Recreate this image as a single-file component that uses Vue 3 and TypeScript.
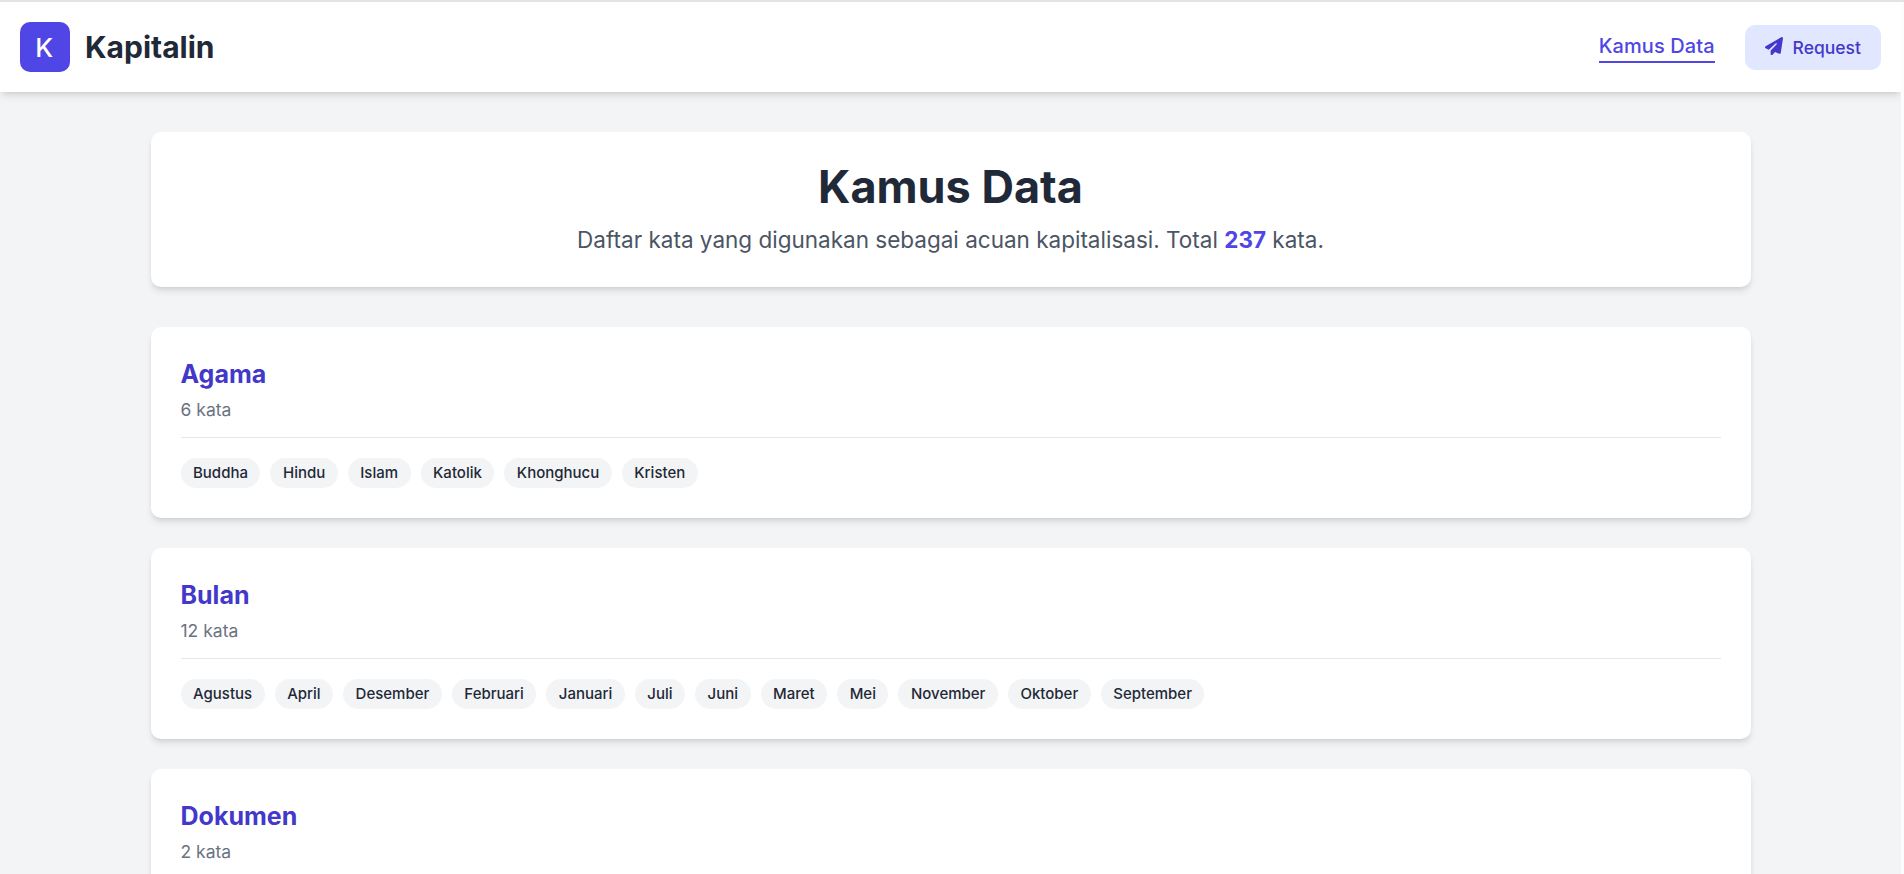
<script setup lang="ts">
interface Category {
  name: string
  words: string[]
}

const categories: Category[] = [
  { name: 'Agama', words: ['Buddha', 'Hindu', 'Islam', 'Katolik', 'Khonghucu', 'Kristen'] },
  {
    name: 'Bulan',
    words: ['Agustus', 'April', 'Desember', 'Februari', 'Januari', 'Juli', 'Juni', 'Maret', 'Mei', 'November', 'Oktober', 'September'],
  },
]
const lastCategory = { name: 'Dokumen', count: 2 }
const total = 237
</script>

<template>
  <div class="page">
    <header class="bar">
      <div class="brand">
        <div class="logo">K</div>
        <span class="brand-name">Kapitalin</span>
      </div>
      <nav class="nav">
        <a class="link">Kamus Data</a>
        <a class="request">
          <svg class="plane" viewBox="0 0 512 512" fill="currentColor">
            <path d="M498.1 5.6c10.1 7 15.4 19.1 13.5 31.2l-64 416c-1.5 9.7-7.4 18.2-16 23s-18.9 5.4-28 1.6L284 427.7l-68.5 74.1c-8.9 9.7-22.9 12.9-35.2 8.1S160 493.2 160 480V396.400c0-4 1.500-7.800 4.200-10.700L331.800 202.800c5.800-6.300 5.600-16-.4-22s-15.700-6.400-22-.7L106 360.800 17.700 316.600C7.100 311.300 .3 300.700 0 288.900s5.900-22.800 16.100-28.700l448-256c10.700-6.100 23.900-5.500 34 1.400z" />
          </svg>
          <span>Request</span>
        </a>
      </nav>
    </header>

    <main class="content">
      <section class="card hero">
        <h1>Kamus Data</h1>
        <p>Daftar kata yang digunakan sebagai acuan kapitalisasi. Total <strong>{{ total }}</strong> kata.</p>
      </section>
      <section v-for="category in categories" :key="category.name" class="card category">
        <div class="head">
          <h2>{{ category.name }}</h2>
          <p>{{ category.words.length }} kata</p>
        </div>
        <div class="words">
          <span v-for="word in category.words" :key="word" class="word">{{ word }}</span>
        </div>
      </section>
      <section class="card category">
        <div class="head">
          <h2>{{ lastCategory.name }}</h2>
          <p>{{ lastCategory.count }} kata</p>
        </div>
      </section>
    </main>
  </div>
</template>

<style>
html,
body {
  margin: 0;
  height: 100%;
  overflow: hidden;
}
</style>

<style scoped>
.page {
  height: 874px;
  overflow: hidden;
  box-sizing: border-box;
  border-top: 2px solid #e3e2e7;
  padding-right: 3px;
  background: linear-gradient(#fcfcfc, #fcfcfc) right / 3px 100% no-repeat #f3f4f6;
  color: #1f2937;
  font-family: Inter, 'Liberation Sans', sans-serif;
  font-size: 16px;
  line-height: 25px;
}
.bar {
  display: flex;
  align-items: center;
  justify-content: space-between;
  box-sizing: border-box;
  height: 90px;
  padding: 0 20px;
  background: #fff;
  box-shadow: 0 5px 7.5px -1.25px rgba(0, 0, 0, 0.1), 0 2.5px 5px -2.5px rgba(0, 0, 0, 0.1);
  clip-path: inset(0 0 -20px 0);
}
.brand {
  display: flex;
  align-items: center;
  gap: 15px;
}
.logo {
  display: flex;
  align-items: center;
  justify-content: center;
  width: 50px;
  height: 50px;
  border-radius: 10px;
  background: #4f46e5;
  color: #fff;
  font-size: 26px;
  font-weight: 500;
  letter-spacing: 1.5px;
}
.brand-name {
  font-size: 30px;
  font-weight: 700;
  line-height: 40px;
}
.nav {
  display: flex;
  align-items: center;
  gap: 30px;
  height: 46px;
}
.link {
  border-bottom: 2px solid #4f46e5;
  color: #4f46e5;
  font-size: 20px;
  font-weight: 500;
  letter-spacing: 0.08px;
  line-height: 30px;
}
.request {
  display: flex;
  align-items: center;
  gap: 10px;
  height: 45px;
  margin-top: 1px;
  padding: 0 20px;
  border-radius: 10px;
  background: #e0e7ff;
  color: #4338ca;
  font-size: 17.5px;
  font-weight: 500;
}
.plane {
  width: 18px;
  height: 18px;
  margin-bottom: 3px;
}
.content {
  width: 1600px;
  margin: 40px auto 0;
}
.card {
  box-sizing: border-box;
  border-radius: 10px;
  background: #fff;
  box-shadow: 0 5px 7.5px -1.25px rgba(0, 0, 0, 0.1), 0 2.5px 5px -2.5px rgba(0, 0, 0, 0.1);
}
.hero {
  height: 155px;
  margin-bottom: 40px;
  padding-top: 30px;
  text-align: center;
}
h1,
h2,
p {
  margin: 0;
}
h1 {
  font-size: 45px;
  font-weight: 700;
  line-height: 50px;
}
.hero p {
  margin-top: 10px;
  color: #4b5563;
  font-size: 22.5px;
  line-height: 35px;
}
strong {
  color: #4f46e5;
  font-weight: 700;
}
.category {
  height: 191px;
  margin-bottom: 30px;
  padding: 30px;
}
.head {
  padding-bottom: 15px;
  border-bottom: 1px solid #e5e7eb;
}
h2 {
  color: #4338ca;
  font-size: 25px;
  font-weight: 700;
  line-height: 35px;
}
.head p {
  margin-top: 5px;
  color: #6b7280;
  font-size: 17.5px;
  line-height: 25px;
}
.words {
  display: flex;
  gap: 10px;
  margin-top: 20px;
}
.word {
  padding: 5px 12.5px;
  border-radius: 15px;
  background: #f3f4f6;
  font-size: 15px;
  font-weight: 500;
  line-height: 20px;
}
</style>
